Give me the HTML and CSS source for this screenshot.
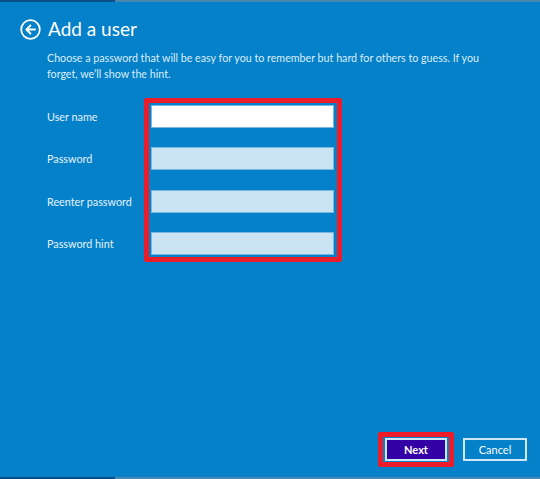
FILE: index.html
```html
<!DOCTYPE html>
<html>
<head>
<meta charset="utf-8">
<link rel="stylesheet" href="styles.css">
</head>
<body>
<div class="window">
  <div class="edge"><span class="edge-dark"></span><span class="edge-light"></span></div>
  <div class="content">
    <div class="header">
      <svg class="back" width="21" height="21" viewBox="0 0 21 21">
        <circle cx="10.5" cy="10.5" r="9.3" fill="none" stroke="#fff" stroke-width="1.8"/>
        <path d="M15 10.5H6.6M10.4 6.5L6.4 10.5L10.4 14.5" fill="none" stroke="#fff" stroke-width="2" stroke-linecap="round" stroke-linejoin="round"/>
      </svg>
      <h1 class="title">Add a user</h1>
    </div>
    <p class="desc">Choose a password that will be easy for you to remember but hard for others to guess. If you forget, we’ll show the hint.</p>
    <div class="form">
      <div class="labels">
        <div class="label">User name</div>
        <div class="label">Password</div>
        <div class="label">Reenter password</div>
        <div class="label">Password hint</div>
      </div>
      <div class="highlight fields">
        <div class="field field-active"></div>
        <div class="field"></div>
        <div class="field"></div>
        <div class="field"></div>
      </div>
    </div>
    <div class="footer">
      <div class="highlight btn-wrap"><button class="btn btn-primary">Next</button></div>
      <button class="btn btn-secondary">Cancel</button>
    </div>
  </div>
  <div class="edge"><span class="edge-dark"></span><span class="edge-light"></span></div>
</div>
</body>
</html>
```
FILE: styles.css
```css
* { box-sizing: border-box; }
html, body { margin: 0; padding: 0; }
body {
  background: #0481c9;
  font-family: Lato, "Open Sans", sans-serif;
  color: #fff;
}
.window {
  width: 540px;
  height: 479px;
  display: flex;
  flex-direction: column;
  overflow: hidden;
}
.edge {
  height: 2px;
  display: flex;
  flex: none;
}
.edge-dark { width: 115px; background: #0c4f86; }
.edge-light { flex: 1; background: #4a86ad; }
.content {
  flex: 1;
  display: flex;
  flex-direction: column;
  padding: 16px 0 0 20px;
}
.header {
  display: flex;
  align-items: center;
  gap: 7px;
  height: 21px;
}
.back { display: block; flex: none; margin-top: 1px; }
.title {
  margin: 0;
  font-size: 19px;
  font-weight: 400;
  line-height: 21px;
  color: #fff;
}
.desc {
  margin: 11px 0 0 27px;
  width: 445px;
  font-size: 10.7px;
  line-height: 16px;
  color: #dcedf8;
}
.form {
  display: flex;
  margin: 16px 0 0 27px;
}
.labels {
  width: 97px;
  display: flex;
  flex-direction: column;
  gap: 19.3px;
  padding-top: 7px;
}
.label {
  height: 23px;
  display: flex;
  align-items: center;
  font-size: 10.8px;
  color: #e6f2fa;
}
.highlight {
  border: 5px solid #ec1c2a;
  border-radius: 2px;
}
.fields {
  width: 198px;
  display: flex;
  flex-direction: column;
  gap: 19.3px;
  padding: 2px 3px 2px 2px;
}
.field {
  height: 23px;
  background: #cbe4f4;
  border: 1px solid #79b6e0;
}
.field-active { background: #fff; }
.footer {
  margin-top: auto;
  margin-bottom: 10px;
  display: flex;
  justify-content: flex-end;
  align-items: center;
  gap: 9px;
  padding-right: 13px;
}
.btn-wrap {
  padding: 1px 2px;
  display: flex;
}
.btn {
  height: 23px;
  font-family: Lato, "Open Sans", sans-serif;
  font-size: 11px;
  font-weight: 700;
  color: #fff;
  border: 2px solid #cfe6f7;
  padding: 0;
  display: flex;
  align-items: center;
  justify-content: center;
}
.btn-primary { width: 62px; background: #3300a6; }
.btn-secondary { width: 64px; background: transparent; font-weight: 400; }
```
